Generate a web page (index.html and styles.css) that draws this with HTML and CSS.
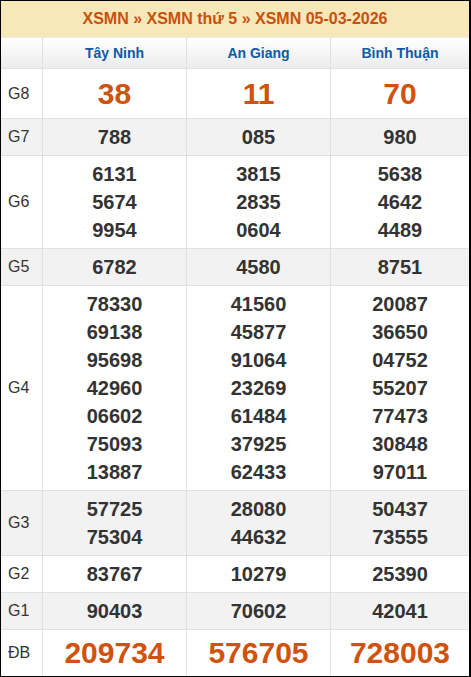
FILE: index.html
```html
<!DOCTYPE html>
<html lang="vi">
<head>
<meta charset="utf-8">
<title>XSMN 05-03-2026</title>
<link rel="stylesheet" href="styles.css">
</head>
<body>
<div class="box">
  <div class="title">XSMN » XSMN thứ 5 » XSMN 05-03-2026</div>
  <table class="kq">
    <thead>
      <tr>
        <th class="c-lbl"></th>
        <th class="c-p">Tây Ninh</th>
        <th class="c-p">An Giang</th>
        <th class="c-last">Bình Thuận</th>
      </tr>
    </thead>
    <tbody>
      <tr class="g8"><td class="lbl">G8</td><td>38</td><td>11</td><td>70</td></tr>
      <tr class="alt"><td class="lbl">G7</td><td>788</td><td>085</td><td>980</td></tr>
      <tr><td class="lbl">G6</td><td>6131<br>5674<br>9954</td><td>3815<br>2835<br>0604</td><td>5638<br>4642<br>4489</td></tr>
      <tr class="alt"><td class="lbl">G5</td><td>6782</td><td>4580</td><td>8751</td></tr>
      <tr><td class="lbl">G4</td><td>78330<br>69138<br>95698<br>42960<br>06602<br>75093<br>13887</td><td>41560<br>45877<br>91064<br>23269<br>61484<br>37925<br>62433</td><td>20087<br>36650<br>04752<br>55207<br>77473<br>30848<br>97011</td></tr>
      <tr class="alt"><td class="lbl">G3</td><td>57725<br>75304</td><td>28080<br>44632</td><td>50437<br>73555</td></tr>
      <tr><td class="lbl">G2</td><td>83767</td><td>10279</td><td>25390</td></tr>
      <tr class="alt"><td class="lbl">G1</td><td>90403</td><td>70602</td><td>42041</td></tr>
      <tr class="db"><td class="lbl">ĐB</td><td>209734</td><td>576705</td><td>728003</td></tr>
    </tbody>
  </table>
</div>
</body>
</html>
```
FILE: styles.css
```css
html, body {
  margin: 0;
  padding: 0;
  background: #fff;
}
.box {
  width: 471px;
  box-sizing: border-box;
  border: 1px solid #000;
  border-right-width: 2px;
  font-family: "Liberation Sans", Arial, sans-serif;
}
.title {
  height: 36px;
  line-height: 36px;
  background: #f7e8ba;
  color: #c8500d;
  font-weight: bold;
  font-size: 16px;
  text-align: center;
}
.kq {
  width: 468px;
  border-collapse: separate;
  border-spacing: 0;
  table-layout: fixed;
}
.kq th, .kq td {
  box-sizing: border-box;
  border-right: 1px solid #e0e0e0;
  border-bottom: 1px solid #e0e0e0;
  padding: 4px 0;
  text-align: center;
}
.kq th:last-child, .kq td:last-child {
  border-right: 0;
}
.kq thead th {
  height: 32px;
  padding: 0;
  background: linear-gradient(#ffffff, #ececec);
  color: #0d5aa7;
  font-size: 14px;
  font-weight: bold;
  border-top: 1px solid #ececec;
}
.c-lbl { width: 42px; }
.c-p { width: 144px; }
.c-last { width: 138px; }
.kq td {
  font-size: 20px;
  line-height: 28px;
  font-weight: bold;
  color: #333;
}
.kq td.lbl {
  text-align: left;
  padding-left: 7px;
  font-size: 16px;
  font-weight: normal;
  color: #333;
}
.kq tr.alt td {
  background: #f2f2f2;
}
.kq tr.g8 td {
  font-size: 30px;
  line-height: 41px;
  color: #d0520c;
}
.kq tr.db td {
  font-size: 30px;
  line-height: 38px;
  color: #d0520c;
  border-bottom: 0;
}
.kq tr.g8 td.lbl, .kq tr.db td.lbl {
  font-size: 16px;
  color: #333;
}
```
